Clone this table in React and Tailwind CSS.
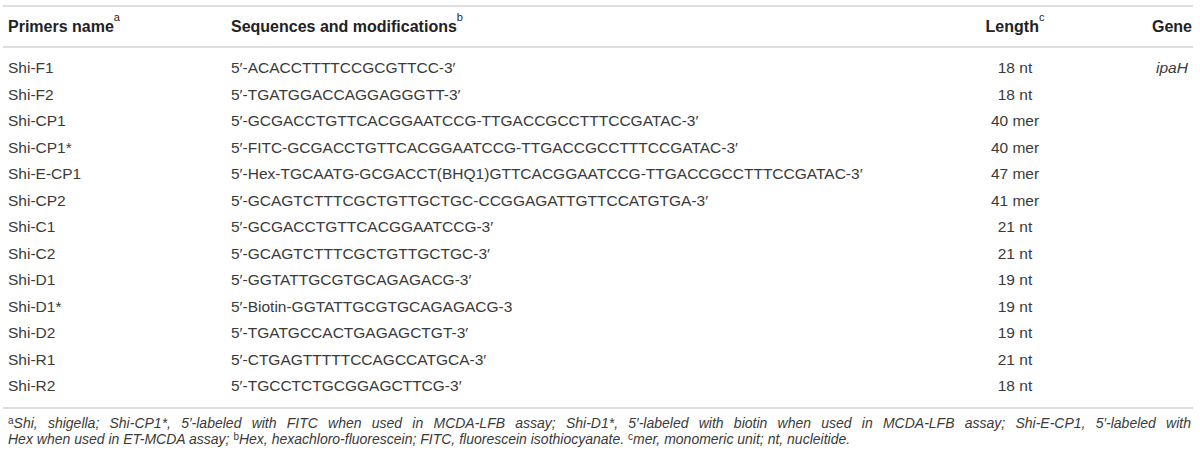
import React from "react";

const rows = [
  ["Shi-F1", "5′-ACACCTTTTCCGCGTTCC-3′", "18 nt", "ipaH"],
  ["Shi-F2", "5′-TGATGGACCAGGAGGGTT-3′", "18 nt", ""],
  ["Shi-CP1", "5′-GCGACCTGTTCACGGAATCCG-TTGACCGCCTTTCCGATAC-3′", "40 mer", ""],
  ["Shi-CP1*", "5′-FITC-GCGACCTGTTCACGGAATCCG-TTGACCGCCTTTCCGATAC-3′", "40 mer", ""],
  ["Shi-E-CP1", "5′-Hex-TGCAATG-GCGACCT(BHQ1)GTTCACGGAATCCG-TTGACCGCCTTTCCGATAC-3′", "47 mer", ""],
  ["Shi-CP2", "5′-GCAGTCTTTCGCTGTTGCTGC-CCGGAGATTGTTCCATGTGA-3′", "41 mer", ""],
  ["Shi-C1", "5′-GCGACCTGTTCACGGAATCCG-3′", "21 nt", ""],
  ["Shi-C2", "5′-GCAGTCTTTCGCTGTTGCTGC-3′", "21 nt", ""],
  ["Shi-D1", "5′-GGTATTGCGTGCAGAGACG-3′", "19 nt", ""],
  ["Shi-D1*", "5′-Biotin-GGTATTGCGTGCAGAGACG-3", "19 nt", ""],
  ["Shi-D2", "5′-TGATGCCACTGAGAGCTGT-3′", "19 nt", ""],
  ["Shi-R1", "5′-CTGAGTTTTTCCAGCCATGCA-3′", "21 nt", ""],
  ["Shi-R2", "5′-TGCCTCTGCGGAGCTTCG-3′", "18 nt", ""],
];

// header superscript
const Sup = ({ children }) => (
  <sup className="text-[11px] font-normal align-[5px] leading-none">{children}</sup>
);

// footnote superscript (upright inside italic text)
const NoteSup = ({ children }) => (
  <span className="text-[10px] not-italic relative top-[-4px] leading-none">{children}</span>
);

export default function App() {
  return (
    <div className="w-[1200px] h-[459px] bg-white text-[#3a3a3a] font-['Liberation_Sans',Arial,sans-serif]">
      <div className="pt-[5px] pl-[3px] w-[1193px]">
        <table className="w-full border-collapse text-[15.5px]">
          <colgroup>
            <col className="w-[228px]" />
            <col className="w-[658px]" />
            <col className="w-[252px]" />
            <col className="w-[52px]" />
          </colgroup>
          <thead>
            <tr className="border-t-2 border-b-2 border-[#dedede] h-[41px] text-[#222] text-[16px]">
              <th className="text-left font-bold pl-[5px]">
                Primers name<Sup>a</Sup>
              </th>
              <th className="text-left font-bold">
                Sequences and modifications<Sup>b</Sup>
              </th>
              <th className="text-center font-bold">
                Length<Sup>c</Sup>
              </th>
              <th className="text-center font-bold pl-[10px]">Gene</th>
            </tr>
          </thead>
          <tbody>
            {rows.map((r, i) => (
              <tr
                key={i}
                className={`${i === 0 ? "[&>td]:pt-[7px]" : ""} ${
                  i === rows.length - 1 ? "border-b-2 border-[#dedede] [&>td]:pb-[7px]" : ""
                }`}
              >
                <td className="pl-[5px] leading-[26.5px] p-0">{r[0]}</td>
                <td className="leading-[26.5px] p-0">{r[1]}</td>
                <td className="text-center leading-[26.5px] p-0">{r[2]}</td>
                <td className="text-center italic pl-[10px] leading-[26.5px]">{r[3]}</td>
              </tr>
            ))}
          </tbody>
        </table>
        <div className="italic text-[14px] leading-[16px] pl-[5px] pr-[2px] pt-[6px]">
          <div className="text-justify [text-align-last:justify]">
            <NoteSup>a</NoteSup>Shi, shigella; Shi-CP1*, 5′-labeled with FITC when used in MCDA-LFB assay; Shi-D1*, 5′-labeled with biotin when used in MCDA-LFB assay; Shi-E-CP1, 5′-labeled with
          </div>
          <div>
            Hex when used in ET-MCDA assay; <NoteSup>b</NoteSup>Hex, hexachloro-fluorescein; FITC, fluorescein isothiocyanate. <NoteSup>c</NoteSup>mer, monomeric unit; nt, nucleitide.
          </div>
        </div>
      </div>
    </div>
  );
}
